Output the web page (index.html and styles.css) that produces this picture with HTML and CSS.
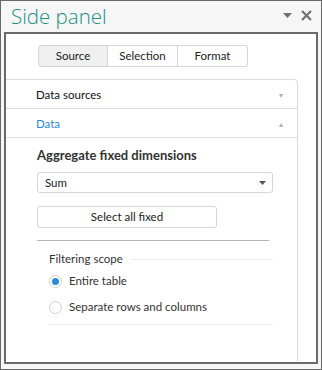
FILE: index.html
```html
<!DOCTYPE html>
<html lang="en">
<head>
  <meta charset="UTF-8">
  <title>Side panel</title>
  <link rel="stylesheet" href="styles.css">
</head>
<body>
  <div class="window">
    <div class="title-bar">
      <span class="title">Side panel</span>
      <span class="title-tools">
        <svg width="9" height="5" viewBox="0 0 9 5"><path d="M0 0h9L4.5 5z" fill="#707070"/></svg>
        <svg width="11" height="11" viewBox="0 0 11 11"><path d="M1 1l9 9M10 1l-9 9" stroke="#707070" stroke-width="2.2"/></svg>
      </span>
    </div>

    <div class="panel">
      <div class="tabs">
        <button class="tab active">Source</button>
        <button class="tab">Selection</button>
        <button class="tab">Format</button>
      </div>

      <div class="accordion">
        <div class="acc-head">
          <span>Data sources</span>
          <span class="acc-arrow">&#9662;</span>
        </div>
        <div class="acc-head open">
          <span>Data</span>
          <span class="acc-arrow">&#9652;</span>
        </div>
        <div class="acc-body">
          <div class="group-title">Aggregate fixed dimensions</div>
          <div class="select">
            <span>Sum</span>
            <svg width="7" height="4" viewBox="0 0 7 4"><path d="M0 0h7L3.5 4z" fill="#555"/></svg>
          </div>
          <button class="btn">Select all fixed</button>
          <div class="divider"></div>
          <div class="fieldset">
            <div class="legend"><span>Filtering scope</span></div>
            <label class="radio"><span class="dot checked"></span>Entire table</label>
            <label class="radio"><span class="dot"></span>Separate rows and columns</label>
            <div class="fieldset-end"></div>
          </div>
        </div>
      </div>
    </div>
  </div>
</body>
</html>
```

FILE: styles.css
```css
* {
  box-sizing: border-box;
}
body {
  margin: 0;
  font-family: Lato, "Open Sans", sans-serif;
  font-size: 11.5px;
  line-height: 16px;
  color: #222;
}
.window {
  width: 322px;
  height: 370px;
  border: 1px solid #6a6a6a;
  background: #f6f6f6;
  display: flex;
  flex-direction: column;
}
.title-bar {
  height: 31px;
  display: flex;
  align-items: center;
  justify-content: space-between;
  padding: 0 9px 0 10px;
}
.title {
  font-family: "Open Sans", sans-serif;
  font-size: 20.5px;
  font-weight: 300;
  color: #1c8f84;
  line-height: 1;
}
.title-tools {
  display: flex;
  align-items: center;
  gap: 9px;
  margin-top: -3px;
}
.panel {
  flex: 1;
  margin: 0 3px 5px 3px;
  border: 2px solid #6a6a6a;
  background: #fff;
  padding-top: 11px;
  display: flex;
  flex-direction: column;
}
.tabs {
  display: flex;
  margin-left: 32px;
}
.tab {
  width: 70px;
  height: 22px;
  font: inherit;
  color: #222;
  background: #fff;
  border: 1px solid #d6d6d6;
  border-left: none;
  padding: 0;
}
.tab:first-child {
  border-left: 1px solid #d6d6d6;
  border-radius: 3px 0 0 3px;
}
.tab:last-child {
  border-radius: 0 3px 3px 0;
}
.tab.active {
  background: #f0f0f0;
}
.accordion {
  flex: 1;
  margin: 12px 18px 0 0;
  border-top: 1px solid #dcdcdc;
  border-right: 1px solid #dcdcdc;
  border-top-right-radius: 4px;
}
.acc-head {
  height: 29px;
  display: flex;
  align-items: center;
  justify-content: space-between;
  padding: 1px 14px 0 30px;
  border-bottom: 1px solid #dcdcdc;
  color: #111;
}
.acc-head.open {
  color: #2a8ad6;
}
.acc-arrow {
  font-size: 8px;
  color: #b0b0b0;
}
.acc-body {
  padding: 9px 0 0 31px;
}
.group-title {
  font-weight: bold;
  font-size: 13px;
  color: #333;
}
.select {
  margin-top: 9px;
  width: 236px;
  height: 21px;
  border: 1px solid #d6d6d6;
  border-radius: 3px;
  display: flex;
  align-items: center;
  justify-content: space-between;
  padding: 0 6px 0 7px;
}
.btn {
  display: block;
  margin-top: 13px;
  width: 180px;
  height: 22px;
  font: inherit;
  color: #222;
  background: #fff;
  border: 1px solid #d6d6d6;
  border-radius: 3px;
  padding: 0;
}
.divider {
  margin-top: 12px;
  width: 232px;
  border-top: 1px solid #b4b4b4;
}
.fieldset {
  margin: 10px 0 0 12px;
  width: 224px;
}
.legend {
  display: flex;
  align-items: center;
  gap: 8px;
  color: #333;
}
.legend::after {
  content: "";
  flex: 1;
  border-top: 1px solid #ebebeb;
}
.radio {
  display: flex;
  align-items: center;
  gap: 7px;
  margin-top: 5px;
  height: 18px;
  color: #333;
}
.radio + .radio {
  margin-top: 8px;
}
.dot {
  width: 13px;
  height: 13px;
  border-radius: 50%;
  border: 1px solid #cfcfcf;
  position: relative;
}
.dot.checked::after {
  content: "";
  position: absolute;
  left: 2px;
  top: 2px;
  width: 7px;
  height: 7px;
  border-radius: 50%;
  background: #2a8ad6;
}
.fieldset-end {
  margin-top: 8px;
  border-top: 1px solid #ebebeb;
}
```
